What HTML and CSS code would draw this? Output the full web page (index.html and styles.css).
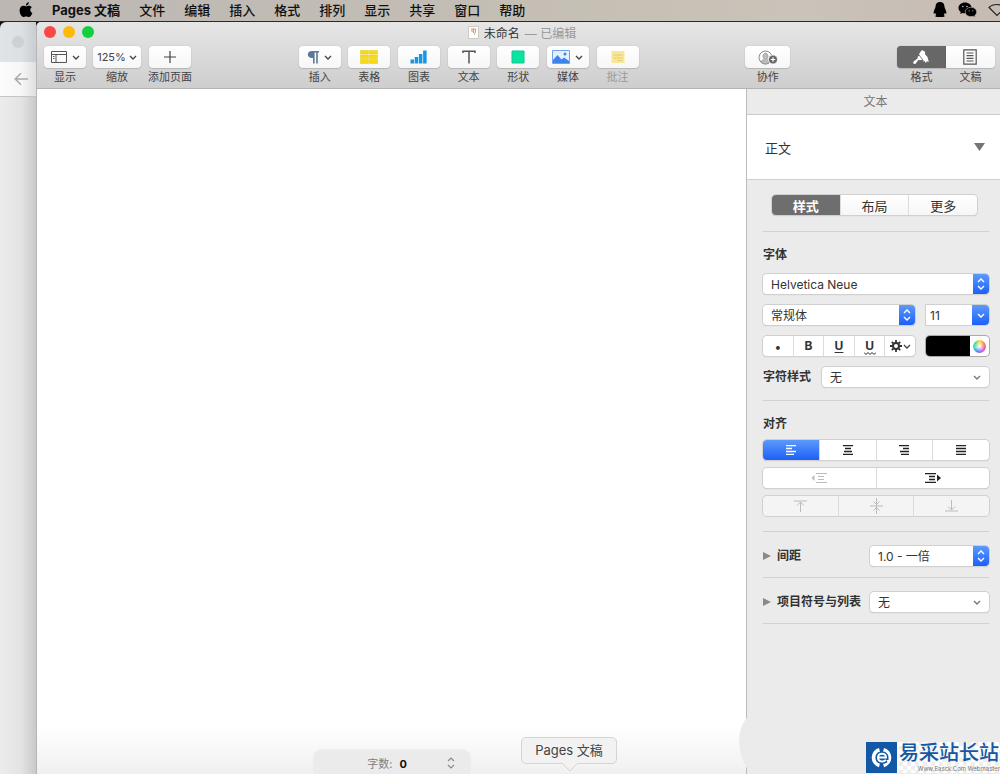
FILE: index.html
```html
<!DOCTYPE html>
<html lang="zh-CN">
<head>
  <meta charset="UTF-8">
  <meta name="viewport" content="width=device-width, initial-scale=1.0">
  <title>Pages 文稿</title>
  <link rel="stylesheet" href="styles.css">
</head>
<body>
  <nav class="menubar">
    <svg class="apple" width="14" height="16" viewBox="0 0 14 16"><path d="M9.9 0.300C9.900 2.100 8.500 3.600 6.900 3.500C6.800 1.900 8.300 0.400 9.900 0.300ZM7.200 4.400C7.900 4.400 8.700 3.700 10 3.700C11.200 3.700 12.300 4.300 12.900 5.200C10.500 6.600 10.900 9.900 13.400 10.900C12.800 12.600 11.400 15 9.900 15C8.800 15 8.500 14.400 7.200 14.400C5.900 14.400 5.500 15 4.500 15C2.600 15 0.600 11.500 0.600 8.500C0.600 5.600 2.400 3.800 4.400 3.800C5.600 3.800 6.500 4.400 7.200 4.400Z"/></svg>
    <b>Pages 文稿</b>
    <span>文件</span>
    <span>编辑</span>
    <span>插入</span>
    <span>格式</span>
    <span>排列</span>
    <span>显示</span>
    <span>共享</span>
    <span>窗口</span>
    <span>帮助</span>
    <div class="status-icons">
      <svg width="14" height="17" viewBox="0 0 14 17"><path d="M7 1C9.800 1 11.500 3 11.500 5.800C11.500 7.200 13.600 9.500 13.400 12.200C13.200 13.300 12.300 12.400 11.800 12C11.600 12.800 11.200 13.500 10.700 14C12.500 14.800 12 16 9.800 16H4.200C2 16 1.500 14.800 3.300 14C2.800 13.500 2.400 12.800 2.200 12C1.700 12.400 0.800 13.300 0.600 12.200C0.400 9.500 2.500 7.200 2.500 5.800C2.500 3 4.200 1 7 1Z"/></svg>
      <svg width="19" height="17" viewBox="0 0 19 17">
        <path d="M7 1.500C3.300 1.500 0.500 3.900 0.500 7C0.500 8.700 1.400 10.100 2.800 11.100L2.200 13L4.500 11.900C5.300 12.200 6.200 12.300 7 12.300C11 12.300 13.600 10 13.600 7C13.600 3.900 10.700 1.500 7 1.500Z"/>
        <path d="M12.900 6.300C16.300 6.300 18.700 8.400 18.700 11C18.700 12.500 17.900 13.700 16.800 14.500L17.200 16.200L15.200 15.200C11 16.400 7.200 14.300 7.200 11C7.200 8.400 9.600 6.300 12.900 6.300Z" stroke="#c7bdb5" stroke-width="0.600"/>
        <circle cx="4.800" cy="5.500" r="0.800" fill="#c7bdb5"/><circle cx="9" cy="5.500" r="0.800" fill="#c7bdb5"/>
        <circle cx="11.200" cy="9.800" r="0.600" fill="#c7bdb5"/><circle cx="14.800" cy="9.800" r="0.600" fill="#c7bdb5"/>
      </svg>
      <svg width="12" height="17" viewBox="0 0 12 17"><path d="M1 6.500C5 2.500 13 2.500 17 6.500L9 14.500Z" fill="none" stroke="#222" stroke-width="1.200"/></svg>
    </div>
  </nav>

  <div class="desktop">
    <!-- 后面的窗口，只露出左侧一条 -->
    <div class="back-window">
      <div class="back-title"><i></i><i></i></div>
      <div class="back-nav">
        <svg width="14" height="14" viewBox="0 0 14 14"><path d="M14 7H1.500M7 1.200L1.200 7L7 12.800" fill="none" stroke="#a8a8a8" stroke-width="1.500"/></svg>
      </div>
      <div class="back-page"></div>
    </div>

    <main class="window">
      <header class="window-header">
        <div class="title-row">
          <div class="lights"><i class="red"></i><i class="yellow"></i><i class="green"></i></div>
          <div class="title">
            <svg width="11" height="13" viewBox="0 0 11 13"><path d="M0.500 0.500H10.500V12.500H0.500Z" fill="#fff" stroke="#c9c9c9"/><path d="M3 3H8L6.500 8.500M5.500 3V7M4 3.500V6" fill="none" stroke="#d59b4f"/></svg>
            <span>未命名</span> <span class="edited">— 已编辑</span>
          </div>
        </div>

        <div class="toolbar">
          <div class="tool-group">
            <div class="tool">
              <button type="button" aria-labelledby="t-view">
                <svg width="16" height="12" viewBox="0 0 16 12"><path d="M0.500 0.500H15.500V11.500H0.500ZM0.500 3.500H15.500M5 3.500V11.500M2 5.500H3.500M2 7.500H3.500" fill="none" stroke="#555"/></svg>
                <svg class="chev" viewBox="0 0 8 5"><path d="M1 1L4 4L7 1"/></svg>
              </button>
              <span id="t-view">显示</span>
            </div>
            <div class="tool">
              <button type="button" class="zoom">125%<svg class="chev" viewBox="0 0 8 5"><path d="M1 1L4 4L7 1"/></svg></button>
              <span>缩放</span>
            </div>
            <div class="tool">
              <button type="button" aria-labelledby="t-add">
                <svg width="14" height="14" viewBox="0 0 14 14"><path d="M7 1V13M1 7H13" stroke="#444" stroke-width="1.200"/></svg>
              </button>
              <span id="t-add">添加页面</span>
            </div>
          </div>

          <div class="tool-group insert-group">
            <div class="tool">
              <button type="button" aria-labelledby="t-insert">
                <svg width="12" height="14" viewBox="0 0 12 14"><path d="M5 1H12V2.500H10.800V13.500H9.200V2.500H7.600V13.500H6V8H5C2.500 8 0.800 6.500 0.800 4.500C0.800 2.500 2.500 1 5 1Z" fill="#5e7796"/></svg>
                <svg class="chev" viewBox="0 0 8 5"><path d="M1 1L4 4L7 1"/></svg>
              </button>
              <span id="t-insert">插入</span>
            </div>
            <div class="tool">
              <button type="button" aria-labelledby="t-table">
                <svg width="18" height="14" viewBox="0 0 18 14" fill="#f7da14"><path d="M0.500 0.500H8.500V4H0.500ZM9.500 0.500H17.500V4H9.500ZM0.500 5H8.500V8.500H0.500ZM9.500 5H17.500V8.500H9.500ZM0.500 9.500H8.500V13.500H0.500ZM9.500 9.500H17.500V13.500H9.500Z" stroke="#e6c90b" stroke-width="0.500"/></svg>
              </button>
              <span id="t-table">表格</span>
            </div>
            <div class="tool">
              <button type="button" aria-labelledby="t-chart">
                <svg width="17" height="14" viewBox="0 0 17 14" fill="#1697e5"><path d="M0.500 9.500H4V13.500H0.500ZM4.700 7H8.200V13.500H4.700ZM8.900 4H12.400V13.500H8.900ZM13.100 0.500H16.600V13.500H13.100Z"/></svg>
              </button>
              <span id="t-chart">图表</span>
            </div>
            <div class="tool">
              <button type="button" aria-labelledby="t-text">
                <svg width="14" height="14" viewBox="0 0 14 14"><path d="M1 3V1.200H13V3M7 1.200V13.500" fill="none" stroke="#555" stroke-width="1.500"/></svg>
              </button>
              <span id="t-text">文本</span>
            </div>
            <div class="tool">
              <button type="button" aria-labelledby="t-shape">
                <svg width="14" height="14" viewBox="0 0 14 14"><path d="M1 1H13V13H1Z" fill="#0be3a0" stroke="#0bc98e"/></svg>
              </button>
              <span id="t-shape">形状</span>
            </div>
            <div class="tool">
              <button type="button" aria-labelledby="t-media">
                <svg width="18" height="14" viewBox="0 0 18 14"><path d="M0.500 0.500H17.500V13.500H0.500Z" fill="#e4f0fe" stroke="#6fa3e8"/><path d="M1 10L5.500 5L9.500 9.500L12 7.500L17 11V13H1Z" fill="#3d84ea"/><circle cx="13" cy="4" r="1.500" fill="#3d84ea"/></svg>
                <svg class="chev" viewBox="0 0 8 5"><path d="M1 1L4 4L7 1"/></svg>
              </button>
              <span id="t-media">媒体</span>
            </div>
            <div class="tool disabled">
              <button type="button" aria-labelledby="t-note" disabled>
                <svg width="14" height="14" viewBox="0 0 14 14"><path d="M0.500 1H13.500V13H0.500Z" fill="#f9e795"/><path d="M2.500 5H11.500M2.500 8H11.500M6 10.500H11.500" stroke="#dccb83"/></svg>
              </button>
              <span id="t-note">批注</span>
            </div>
          </div>

          <div class="tool">
            <button type="button" class="share" aria-labelledby="t-share">
              <svg width="20" height="15" viewBox="0 0 20 15"><circle cx="7.500" cy="7.500" r="6.500" fill="none" stroke="#888"/><path d="M3 12C3.500 9.800 5.500 10.500 6.300 9.300C4.500 7 4.800 3.300 7.500 3.300S10.500 7 8.700 9.300C9.500 10.500 11.500 9.800 12 12C9.500 14.500 5.500 14.500 3 12Z" fill="#bbb" stroke="#888" stroke-width="0.700"/><circle cx="15" cy="9.500" r="4.500" fill="#666" stroke="#fff" stroke-width="0.800"/><path d="M15 7.200V11.800M12.700 9.500H17.300" stroke="#fff" stroke-width="1.200"/></svg>
            </button>
            <span id="t-share">协作</span>
          </div>

          <div class="tool-group panel-group">
            <div class="tool">
              <button type="button" class="active" aria-labelledby="t-format">
                <svg width="18" height="16" viewBox="0 0 18 16"><path d="M8 3.500L10 1L13 2.800L13.200 5.500L15.500 8L16.800 13L14.800 12.200L14 14L12.500 12L11.500 12.500L6.800 6Z" fill="#fff"/><path d="M7.500 6.500L10.500 10.500L8 11.200L6.500 10.700L3.800 14.600C2.500 16 0.200 14.200 1.600 12.600L5.500 9.500L5.800 7.800Z" fill="#fff"/><path d="M6.800 5.500L11.500 12" stroke="#676767" stroke-width="0.800"/></svg>
              </button>
              <span id="t-format">格式</span>
            </div>
            <div class="tool">
              <button type="button" aria-labelledby="t-doc">
                <svg width="14" height="16" viewBox="0 0 14 16"><path d="M0.800 0.800H13.200V15.200H0.800ZM3.500 4H10.500M3.500 6.700H10.500M3.500 9.400H10.500M3.500 12H10.500" fill="none" stroke="#555" stroke-width="1.200"/></svg>
              </button>
              <span id="t-doc">文稿</span>
            </div>
          </div>
        </div>
      </header>

      <div class="window-body">
        <section class="page-area">
          <button type="button" class="word-count">
            <span>字数: <b>0</b></span>
            <svg width="8" height="12" viewBox="0 0 8 12"><path d="M1 4L4 1L7 4M1 8L4 11L7 8" fill="none" stroke="#8a8a8a" stroke-width="1.200"/></svg>
          </button>
          <div class="dock-tip">Pages 文稿
            <svg width="16" height="9" viewBox="0 0 16 9"><path d="M0 0L8 8L16 0" fill="#f2f2f2" stroke="#d4d4d4"/><path d="M1 0H15" stroke="#f2f2f2" stroke-width="2"/></svg>
          </div>
        </section>

        <aside class="sidebar">
          <h2>文本</h2>
          <button type="button" class="para-style">正文
            <svg width="11" height="8" viewBox="0 0 11 8"><path d="M0 0H11L5.500 8Z" fill="#757575"/></svg>
          </button>

          <div class="pane">
            <div class="segmented tabs">
              <button type="button" class="active">样式</button>
              <button type="button">布局</button>
              <button type="button">更多</button>
            </div>

            <section class="font-section">
              <label for="font">字体</label>
              <div class="select">
                <select id="font"><option>Helvetica Neue</option></select>
                <span class="arrow"><svg width="8" height="12" viewBox="0 0 8 12"><path d="M1 4L4 1L7 4M1 8L4 11L7 8"/></svg></span>
              </div>
              <div class="row">
                <div class="select">
                  <select aria-label="字体样式"><option>常规体</option></select>
                  <span class="arrow"><svg width="8" height="12" viewBox="0 0 8 12"><path d="M1 4L4 1L7 4M1 8L4 11L7 8"/></svg></span>
                </div>
                <div class="combo">
                  <input type="text" value="11" aria-label="字号">
                  <button type="button" aria-label="选择字号"><svg width="8" height="5" viewBox="0 0 8 5"><path d="M1 1L4 4L7 1"/></svg></button>
                </div>
              </div>
              <div class="row">
                <div class="segmented styles">
                  <button type="button">•</button>
                  <button type="button"><b>B</b></button>
                  <button type="button"><b class="underline">U</b></button>
                  <button type="button" class="wavy"><b>U</b><svg width="12" height="3" viewBox="0 0 12 3"><path d="M0 0.500L2 2.500L4 0.500L6 2.500L8 0.500L10 2.500L12 0.500"/></svg></button>
                  <button type="button" aria-label="高级选项">
                    <svg width="12" height="12" viewBox="0 0 12 12"><path d="M6 0V12M0 6H12M1.800 1.800L10.200 10.200M10.200 1.800L1.800 10.200" stroke="#333" stroke-width="1.800"/><circle cx="6" cy="6" r="3" fill="#fff" stroke="#333" stroke-width="2"/></svg>
                    <svg class="chev" viewBox="0 0 8 5"><path d="M1 1L4 4L7 1"/></svg>
                  </button>
                </div>
                <div class="color-well">
                  <button type="button" class="swatch" aria-label="文本颜色"></button>
                  <button type="button" class="picker" aria-label="颜色面板"><i></i></button>
                </div>
              </div>
              <div class="row">
                <label for="charStyle">字符样式</label>
                <div class="select plain">
                  <select id="charStyle"><option>无</option></select>
                  <span class="arrow"><svg width="8" height="5" viewBox="0 0 8 5"><path d="M1 1L4 4L7 1"/></svg></span>
                </div>
              </div>
            </section>

            <section class="align-section">
              <h3>对齐</h3>
              <div class="segmented">
                <button type="button" class="selected" aria-label="左对齐"><svg width="10" height="10" viewBox="0 0 10 10"><path d="M0 0.500H10M0 3.500H6M0 6.500H10M0 9.500H8"/></svg></button>
                <button type="button" aria-label="居中"><svg width="10" height="10" viewBox="0 0 10 10"><path d="M0 0.500H10M2 3.500H8M1 6.500H9M0 9.500H10"/></svg></button>
                <button type="button" aria-label="右对齐"><svg width="10" height="10" viewBox="0 0 10 10"><path d="M0 0.500H10M4 3.500H10M1 6.500H10M2 9.500H10"/></svg></button>
                <button type="button" aria-label="两端对齐"><svg width="10" height="10" viewBox="0 0 10 10"><path d="M0 0.500H10M0 3.500H10M0 6.500H10M0 9.500H10"/></svg></button>
              </div>
              <div class="segmented">
                <button type="button" class="dim" aria-label="减少缩进"><svg width="16" height="10" viewBox="0 0 16 10"><path d="M5 0.500H16M7 3.500H13M7 6.500H13M5 9.500H16"/><path d="M3.500 2V8L0.500 5Z" fill="#bbb" stroke="none"/></svg></button>
                <button type="button" aria-label="增加缩进"><svg width="16" height="10" viewBox="0 0 16 10"><path d="M0 0.500H11M4 3.500H10M4 6.500H10M0 9.500H11"/><path d="M12 1.500V8.500L16 5Z" fill="#222" stroke="none"/></svg></button>
              </div>
              <div class="segmented disabled">
                <button type="button" class="dim" aria-label="顶部对齐" disabled><svg width="13" height="12" viewBox="0 0 13 12"><path d="M0 1H13M6.500 12V2M3 5.500L6.500 2L10 5.500"/></svg></button>
                <button type="button" class="dim" aria-label="垂直居中" disabled><svg width="13" height="16" viewBox="0 0 13 16"><path d="M0 8H13M6.500 0V16M3.500 3.500L6.500 6.500L9.500 3.500M3.500 12.500L6.500 9.500L9.500 12.500"/></svg></button>
                <button type="button" class="dim" aria-label="底部对齐" disabled><svg width="13" height="12" viewBox="0 0 13 12"><path d="M0 11H13M6.500 0V10M3 6.500L6.500 10L10 6.500"/></svg></button>
              </div>
            </section>

            <section class="fold-section">
              <svg width="8" height="8" viewBox="0 0 8 8"><path d="M0 0L8 4L0 8Z" fill="#8a8a8a"/></svg>
              <label for="spacing">间距</label>
              <div class="select">
                <select id="spacing"><option>1.0 - 一倍</option></select>
                <span class="arrow"><svg width="8" height="12" viewBox="0 0 8 12"><path d="M1 4L4 1L7 4M1 8L4 11L7 8"/></svg></span>
              </div>
            </section>

            <section class="fold-section">
              <svg width="8" height="8" viewBox="0 0 8 8"><path d="M0 0L8 4L0 8Z" fill="#8a8a8a"/></svg>
              <label for="bullets">项目符号与列表</label>
              <div class="select plain">
                <select id="bullets"><option>无</option></select>
                <span class="arrow"><svg width="8" height="5" viewBox="0 0 8 5"><path d="M1 1L4 4L7 1"/></svg></span>
              </div>
            </section>
          </div>

          <div class="blob"></div>
          <div class="watermark">
            <svg width="31" height="31" viewBox="0 0 31 31"><path d="M0 0H31V31H0Z" fill="#1258a4"/><path d="M13.500 7.800A8 8 0 0 0 13.500 23.200M17.500 7.800A8 8 0 0 1 17.500 23.200" fill="none" stroke="#fff" stroke-width="4"/><path d="M12 15.500H20C20 10.500 12 10.500 12 15.500C12 20 17 20.500 20 18" fill="none" stroke="#1258a4" stroke-width="5"/><path d="M12 15.500H20C20 10.500 12 10.500 12 15.500C12 20 17 20.500 20 18" fill="none" stroke="#fff" stroke-width="2"/></svg>
            <div class="watermark-text">
              <strong>易采站长站</strong>
              <small>Www.Easck.Com Webmaster</small>
            </div>
          </div>
        </aside>
      </div>
    </main>
  </div>
</body>
</html>
```

FILE: styles.css
```css
* {
  box-sizing: border-box;
}

body {
  margin: 0;
  height: 100vh;
  display: flex;
  flex-direction: column;
  overflow: hidden;
  background: #111;
  color: #333;
  font-family: Inter, "Noto Sans CJK SC", sans-serif;
  font-size: 12px;
}

button, input, select {
  font: inherit;
  color: inherit;
  margin: 0;
  padding: 0;
  border: none;
  background: none;
}

button {
  display: flex;
  align-items: center;
  justify-content: center;
}

h2, h3 {
  margin: 0;
  font-size: 12px;
}

svg {
  flex: none;
}

.chev {
  width: 8px;
  height: 5px;
  fill: none;
  stroke: #444;
  stroke-width: 1.3;
}

/* 菜单栏 */
.menubar {
  flex: none;
  height: 22px;
  display: flex;
  align-items: center;
  gap: 19px;
  padding: 0 0 2px 19px;
  border-bottom: 1px solid #2b2826;
  background: linear-gradient(90deg, #bcb7b3, #c6c0b5 65%, #c9c3b9 80%, #c6bbb3);
  color: #111;
  font-size: 13px;
  font-weight: 500;
  white-space: nowrap;
}

.menubar b {
  font-weight: 700;
}

.status-icons {
  display: flex;
  align-items: center;
  gap: 11px;
  margin-left: auto;
}

.desktop {
  flex: 1;
  min-height: 0;
  display: flex;
}

/* 后面的窗口 */
.back-window {
  flex: none;
  width: 36px;
  display: flex;
  flex-direction: column;
  overflow: hidden;
  border-top-left-radius: 6px;
}

.back-title {
  height: 40px;
  display: flex;
  align-items: center;
  gap: 9px;
  padding-left: 12px;
  background: linear-gradient(90deg, #e0e4e7, #dde0e3 60%, #c9ccd0);
}

.back-title i {
  flex: none;
  width: 12px;
  height: 12px;
  border-radius: 50%;
  background: #cdd1d5;
}

.back-nav {
  height: 35px;
  display: flex;
  align-items: center;
  padding-left: 14px;
  border-bottom: 1px solid #c4c4c4;
  background: linear-gradient(90deg, #fcfcfc, #f6f6f6 60%, #dfdfdf);
}

.back-page {
  flex: 1;
  background: linear-gradient(90deg, #ececec, #e3e3e3 60%, #c9c9c9);
}

.window {
  flex: 1;
  min-width: 0;
  display: flex;
  flex-direction: column;
  overflow: hidden;
  border-left: 1px solid #b5b5b5;
  border-top-left-radius: 5px;
  background: #fff;
}

.window-header {
  flex: none;
  height: 67px;
  border-bottom: 1px solid #b4b4b4;
  background: linear-gradient(#e6e6e6, #cecece);
}

.title-row {
  height: 22px;
  display: flex;
  align-items: center;
  padding: 0 0 2px 7px;
}

.lights {
  display: flex;
  gap: 7px;
}

.lights i {
  width: 12px;
  height: 12px;
  border-radius: 50%;
}

.red {
  background: #fc4642;
}

.yellow {
  background: #fdb90c;
}

.green {
  background: #12cf3f;
}

.title {
  flex: 1;
  display: flex;
  align-items: center;
  justify-content: center;
  gap: 5px;
  padding-right: 50px;
  font-size: 12px;
}

.edited {
  color: #999;
}

/* 工具栏 */
.toolbar {
  display: flex;
  justify-content: space-between;
  padding: 2px 5px 0 7px;
}

.tool-group {
  display: flex;
  gap: 7px;
}

.insert-group {
  width: 340px;
  gap: 0;
  justify-content: space-between;
}

.tool {
  display: flex;
  flex-direction: column;
  align-items: center;
  gap: 1px;
  font-size: 11px;
  line-height: 16px;
  color: #444;
  white-space: nowrap;
}

.tool button {
  width: 42px;
  height: 22px;
  gap: 5px;
  border-radius: 4px;
  background: linear-gradient(#fff, #f6f6f6);
  box-shadow: 0 0 1px rgba(0, 0, 0, 0.3), 0 1px 1px rgba(0, 0, 0, 0.12);
}

.tool .zoom {
  width: 48px;
  gap: 3px;
}

.tool .share {
  width: 45px;
}

.tool.disabled {
  color: #999;
}

.panel-group {
  gap: 0;
}

.panel-group .tool button {
  width: 49px;
  border-radius: 0 4px 4px 0;
}

.panel-group .tool .active {
  border-radius: 4px 0 0 4px;
  background: #676767;
}

.window-body {
  flex: 1;
  min-height: 0;
  display: flex;
}

.page-area {
  position: relative;
  flex: 1;
  background: linear-gradient(#fff 93%, #f0f0f0);
}

.word-count {
  position: absolute;
  left: 277px;
  bottom: -2px;
  width: 156px;
  height: 26px;
  gap: 40px;
  padding-left: 38px;
  border-radius: 8px;
  background: #ebebeb;
  box-shadow: 0 0 2px #ddd;
  color: #808080;
  font-size: 11px;
}

.word-count b {
  margin-left: 4px;
  color: #111;
}

.dock-tip {
  position: absolute;
  left: 484px;
  bottom: 10px;
  width: 96px;
  border: 1px solid #d4d4d4;
  border-radius: 5px;
  background: #f2f2f2;
  color: #444;
  font-size: 13px;
  line-height: 25px;
  text-align: center;
}

.dock-tip svg {
  position: absolute;
  left: 40px;
  top: 100%;
}

/* 右侧检查器 */
.sidebar {
  position: relative;
  flex: none;
  width: 254px;
  border-left: 1px solid #bcbcbc;
  background: #ebebeb;
}

.sidebar h2 {
  height: 26px;
  padding-left: 4px;
  border-bottom: 1px solid #cbcbcb;
  color: #777;
  font-weight: 400;
  line-height: 25px;
  text-align: center;
}

.para-style {
  width: 100%;
  height: 65px;
  justify-content: space-between;
  padding: 0 15px 0 18px;
  border-bottom: 1px solid #cfcfcf;
  background: #fff;
  font-size: 13px;
}

.pane {
  padding: 15px 11px 0 16px;
}

.segmented {
  flex: 1;
  display: flex;
  height: 20px;
  border-radius: 4px;
  background: #fff;
  box-shadow: 0 0 0 1px #d0d0d0, 0 1px 1px #b5b5b5;
  overflow: hidden;
}

.segmented button {
  flex: 1;
  height: 20px;
  stroke: #222;
  stroke-width: 1.3;
}

.segmented button + button {
  border-left: 1px solid #dcdcdc;
}

.segmented svg {
  fill: none;
}

.segmented .selected {
  background: linear-gradient(#5c9afb, #1c60f8);
  stroke: #fff;
}

.segmented .dim {
  stroke: #bbb;
  stroke-width: 1;
}

.segmented.disabled {
  background: #f4f4f4;
  box-shadow: 0 0 0 1px #d0d0d0;
}

.tabs {
  margin: 0 12px 16px 9px;
  background: linear-gradient(#fff, #f6f6f6);
  font-size: 13px;
}

.tabs .active {
  background: #6e6e6e;
  color: #fff;
  font-weight: 600;
}

.styles button {
  gap: 1px;
}

.styles .chev {
  stroke-width: 1.3;
}

.styles b {
  line-height: 12px;
}

.underline {
  text-decoration: underline;
  text-underline-offset: 2px;
}

.styles .wavy {
  flex-direction: column;
  gap: 0;
  padding-top: 2px;
  stroke-width: 1;
}

.pane section {
  display: flex;
  flex-direction: column;
  border-top: 1px solid #d2d2d2;
}

.pane section:last-child {
  border-bottom: 1px solid #d2d2d2;
}

.pane label, .pane h3 {
  font-weight: 600;
  line-height: 16px;
  white-space: nowrap;
}

.pane .font-section {
  gap: 11px;
  padding: 15px 0 13px;
}

.pane .align-section {
  gap: 8px;
  padding: 15px 0;
}

.align-section .segmented {
  flex: none;
}

.pane .fold-section {
  flex-direction: row;
  align-items: center;
  gap: 6px;
  padding: 14px 0 11px;
}

.fold-section .select {
  flex: none;
  width: 119px;
  margin-left: auto;
}

.row {
  display: flex;
  align-items: center;
  gap: 11px;
}

.select {
  position: relative;
  flex: 1;
  border-radius: 4px;
  background: #fff;
  box-shadow: 0 0 0 1px #d0d0d0, 0 1px 1px #b5b5b5;
}

.select select {
  display: block;
  width: 100%;
  height: 20px;
  padding: 0 22px 0 8px;
  appearance: none;
}

.arrow {
  position: absolute;
  top: 0;
  right: 0;
  width: 16px;
  height: 20px;
  display: flex;
  align-items: center;
  justify-content: center;
  border-radius: 0 4px 4px 0;
  background: linear-gradient(#5c9afb, #1c60f8);
  pointer-events: none;
}

.arrow svg, .combo svg {
  fill: none;
  stroke: #fff;
  stroke-width: 1.4;
}

.plain .arrow {
  right: 4px;
  background: none;
}

.plain .arrow svg {
  stroke: #777;
}

.combo, .color-well {
  flex: none;
  width: 63px;
  height: 20px;
  display: flex;
  overflow: hidden;
  border-radius: 0 4px 4px 0;
  background: #fff;
  box-shadow: 0 0 0 1px #d0d0d0;
}

.combo input {
  flex: 1;
  min-width: 0;
  padding-left: 4px;
}

.combo button {
  width: 17px;
  background: linear-gradient(#5c9afb, #1c60f8);
}

.color-well {
  border-radius: 4px;
  box-shadow: 0 0 0 1px #aaa;
}

.swatch {
  flex: 1;
  background: #000;
}

.picker {
  width: 19px;
}

.picker i {
  width: 13px;
  height: 13px;
  border-radius: 50%;
  background: radial-gradient(#fff, transparent 60%), conic-gradient(#ffd93b, #ff8a4a, #f4568f, #b65cf0, #4a8af5, #3fd5d8, #4fdc6b, #ffd93b);
}

/* 右下角水印 */
.blob {
  position: absolute;
  left: -8px;
  bottom: -20px;
  width: 160px;
  height: 90px;
  border-radius: 40px 0 0 60px;
  background: #ebebeb;
}

.watermark {
  position: absolute;
  right: 0;
  bottom: 1px;
  display: flex;
  gap: 2px;
  background: #f7f7f7;
}

.watermark-text {
  width: 101px;
  overflow: hidden;
  white-space: nowrap;
  background: repeating-conic-gradient(#eee 0 25%, #fff 0 50%) 0 0 / 8px 8px;
}

.watermark strong {
  display: block;
  color: #1258a4;
  font-size: 20px;
  font-weight: 500;
  line-height: 23px;
}

.watermark small {
  display: block;
  color: #777;
  font-size: 6px;
  line-height: 8px;
  text-align: right;
}
```
